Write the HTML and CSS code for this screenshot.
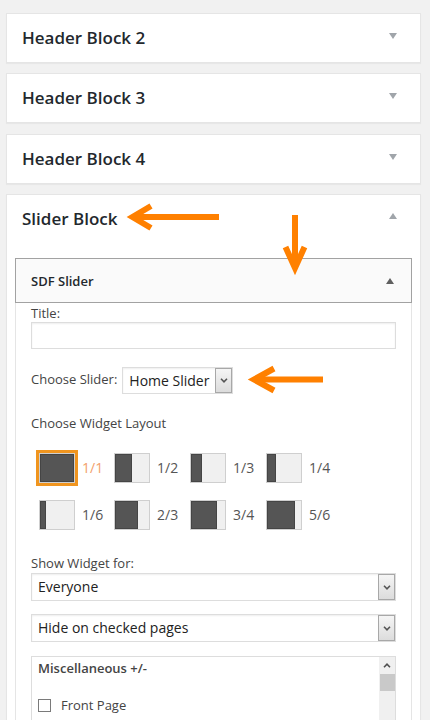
FILE: index.html
```html
<!DOCTYPE html>
<html lang="en">
<head>
<meta charset="utf-8">
<title>Widgets</title>
<link rel="stylesheet" href="styles.css">
</head>
<body>
<div class="page">
  <div class="card">
    <div class="card-head"><h3>Header Block 2</h3><span class="tri down"></span></div>
  </div>
  <div class="card">
    <div class="card-head"><h3>Header Block 3</h3><span class="tri down"></span></div>
  </div>
  <div class="card">
    <div class="card-head"><h3>Header Block 4</h3><span class="tri down"></span></div>
  </div>
  <div class="card">
    <div class="card-head"><h3>Slider Block</h3><span class="tri up"></span></div>
    <div class="card-body">
      <div class="widget">
        <div class="widget-top"><h4>SDF Slider</h4><span class="tri up dark"></span></div>
        <div class="widget-inside">
          <div class="lbl">Title:</div>
          <div class="input"></div>
          <div class="slider-row">
            <span class="lbl lbl-inline">Choose Slider:</span>
            <div class="select select-small">
              <span class="val">Home Slider</span>
              <span class="btn"><svg width="8" height="5" viewBox="0 0 8 5"><path d="M1 0.8 L4 3.8 L7 0.8" fill="none" stroke="#555" stroke-width="1.6"/></svg></span>
            </div>
          </div>
          <div class="lbl layout-title">Choose Widget Layout</div>
          <div class="layouts">
            <div class="item sel"><div class="frame"><div class="ico"><div class="fill" style="width:100%"></div></div></div><span class="frac">1/1</span></div>
            <div class="item"><div class="frame"><div class="ico"><div class="fill" style="width:50%"></div></div></div><span class="frac">1/2</span></div>
            <div class="item"><div class="frame"><div class="ico"><div class="fill" style="width:33.3%"></div></div></div><span class="frac">1/3</span></div>
            <div class="item"><div class="frame"><div class="ico"><div class="fill" style="width:25%"></div></div></div><span class="frac">1/4</span></div>
            <div class="item"><div class="frame"><div class="ico"><div class="fill" style="width:17%"></div></div></div><span class="frac">1/6</span></div>
            <div class="item"><div class="frame"><div class="ico"><div class="fill" style="width:66.7%"></div></div></div><span class="frac">2/3</span></div>
            <div class="item"><div class="frame"><div class="ico"><div class="fill" style="width:75%"></div></div></div><span class="frac">3/4</span></div>
            <div class="item"><div class="frame"><div class="ico"><div class="fill" style="width:83.3%"></div></div></div><span class="frac">5/6</span></div>
          </div>
          <div class="lbl show-title">Show Widget for:</div>
          <div class="select select-full">
            <span class="val">Everyone</span>
            <span class="btn"><svg width="8" height="5" viewBox="0 0 8 5"><path d="M1 0.8 L4 3.8 L7 0.8" fill="none" stroke="#555" stroke-width="1.6"/></svg></span>
          </div>
          <div class="select select-full second">
            <span class="val">Hide on checked pages</span>
            <span class="btn"><svg width="8" height="5" viewBox="0 0 8 5"><path d="M1 0.8 L4 3.8 L7 0.8" fill="none" stroke="#555" stroke-width="1.6"/></svg></span>
          </div>
          <div class="pages-box">
            <div class="pages-list">
              <div class="misc">Miscellaneous +/-</div>
              <div class="check-row"><span class="checkbox"></span><span class="check-label">Front Page</span></div>
            </div>
            <div class="scrollbar">
              <span class="sb-up"><svg width="8" height="5" viewBox="0 0 8 5"><path d="M1 4.2 L4 1.2 L7 4.2" fill="none" stroke="#505050" stroke-width="1.6"/></svg></span>
              <span class="sb-thumb"></span>
            </div>
          </div>
        </div>
      </div>
    </div>
  </div>

  <svg class="arrows" width="430" height="720" viewBox="0 0 430 720">
    <g fill="none" stroke="#ff8000" stroke-width="6" stroke-linejoin="miter" stroke-miterlimit="6">
      <line x1="133" y1="217" x2="219" y2="217"/>
      <polyline points="151,206 132.5,217 151,228"/>
      <line x1="295" y1="215" x2="295" y2="266"/>
      <polyline points="285.5,247 295,268 304.5,247"/>
      <line x1="255" y1="379.5" x2="323" y2="379.5"/>
      <polyline points="274,368.5 254,379.5 274,390.5"/>
    </g>
  </svg>
</div>
</body>
</html>
```

FILE: styles.css
```css
html, body {
  margin: 0;
  padding: 0;
  background: #f1f1f1;
  height: 720px;
  overflow: hidden;
}

.page {
  position: relative;
  padding-top: 13px;
  font-family: "Open Sans", "Noto Sans", sans-serif;
  color: #444;
}

.card {
  margin: 0 0 10.4px 6px;
  width: 415px;
  box-sizing: border-box;
  background: #fff;
  border: 1px solid #e5e5e5;
  box-shadow: 0 1px 1px rgba(0, 0, 0, 0.04);
}

.card-head {
  display: flex;
  justify-content: space-between;
  align-items: flex-start;
  padding: 12px 23px 12px 15px;
}

.card-head h3 {
  margin: 0;
  font-size: 17px;
  font-weight: 600;
  line-height: 24px;
  color: #23282d;
}

.tri {
  display: block;
  width: 0;
  height: 0;
  border-left: 4px solid transparent;
  border-right: 4px solid transparent;
}

.tri.down {
  margin-top: 7px;
  border-top: 6px solid #a0a5aa;
}

.tri.up {
  margin-top: 6px;
  border-bottom: 6px solid #a0a5aa;
}

.tri.up.dark {
  margin-top: 6px;
  border-bottom-color: #606060;
}

.card-body {
  padding: 15px 8px 0;
}

.widget {
  background: #fff;
}

.widget-top {
  display: flex;
  justify-content: space-between;
  align-items: flex-start;
  background: #fafafa;
  border: 1px solid #a2a2a2;
  padding: 13px 17px 12px 15px;
}

.widget-top h4 {
  margin: 0;
  font-size: 13px;
  font-weight: 600;
  line-height: 18px;
  color: #23282d;
}

.widget-inside {
  border-left: 1px solid #e5e5e5;
  border-right: 1px solid #e5e5e5;
  padding: 2px 15px 0;
}

.lbl {
  font-size: 13px;
  line-height: 17px;
  color: #444;
}

.input {
  height: 27px;
  box-sizing: border-box;
  border: 1px solid #ddd;
  box-shadow: inset 0 1px 2px rgba(0, 0, 0, 0.07);
  background: #fff;
}

.slider-row {
  display: flex;
  align-items: flex-start;
  margin-top: 18px;
}

.lbl-inline {
  padding-top: 4px;
  margin-right: 5px;
}

.select {
  display: flex;
  align-items: stretch;
  box-sizing: border-box;
  height: 27px;
  border: 1px solid #ddd;
  background: #fff;
  box-shadow: inset 0 1px 2px rgba(0, 0, 0, 0.07);
}

.select .val {
  flex: 1;
  padding-left: 6px;
  font-size: 14px;
  line-height: 25px;
  color: #222;
  white-space: nowrap;
  overflow: hidden;
}

.select .btn {
  width: 15px;
  border: 1px solid #a8a8a8;
  background: linear-gradient(#f5f5f5, #dcdcdc);
  display: flex;
  align-items: center;
  justify-content: center;
}

.select-small {
  width: 111px;
}

.select-full {
  height: 28px;
  margin-top: 1px;
}

.select-full .val {
  line-height: 26px;
}

.select-full.second {
  margin-top: 13px;
}

.layout-title {
  margin-top: 21px;
}

.layouts {
  display: grid;
  grid-template-columns: 75px 76px 76px 76px;
  row-gap: 11px;
  margin: 18px 0 0 5px;
}

.item {
  display: flex;
  align-items: center;
}

.frame {
  border: 3px solid transparent;
}

.item.sel .frame {
  border-color: #f0951f;
}

.ico {
  width: 36px;
  height: 30px;
  box-sizing: border-box;
  border: 1px solid #cfcfcf;
  background: #f0f0f0;
  display: flex;
}

.fill {
  height: 100%;
  background: #555;
  box-shadow: inset 0 0 0 1px #454545;
}

.frac {
  margin-left: 4px;
  font-size: 14px;
  line-height: 18px;
  color: #555;
}

.item.sel .frac {
  color: #f3a06c;
}

.show-title {
  margin-top: 22px;
}

.pages-box {
  display: flex;
  margin-top: 14px;
  height: 80px;
  border: 1px solid #ddd;
  background: #fff;
}

.pages-list {
  flex: 1;
  padding: 3px 6px 0;
}

.misc {
  font-size: 13px;
  font-weight: 600;
  line-height: 17px;
  color: #444;
}

.check-row {
  display: flex;
  align-items: center;
  margin-top: 20px;
  height: 17px;
}

.checkbox {
  width: 13px;
  height: 13px;
  box-sizing: border-box;
  border: 1px solid #7a7a7a;
  background: #fff;
}

.check-label {
  margin-left: 10px;
  font-size: 13px;
  line-height: 17px;
  color: #444;
}

.scrollbar {
  width: 16px;
  background: #f0f0f0;
  display: flex;
  flex-direction: column;
  align-items: center;
}

.sb-up {
  display: flex;
  height: 17px;
  align-items: center;
  justify-content: center;
}

.sb-thumb {
  width: 15px;
  height: 17px;
  background: #c9c9c9;
}

.arrows {
  position: absolute;
  top: 0;
  left: 0;
  pointer-events: none;
}
```
